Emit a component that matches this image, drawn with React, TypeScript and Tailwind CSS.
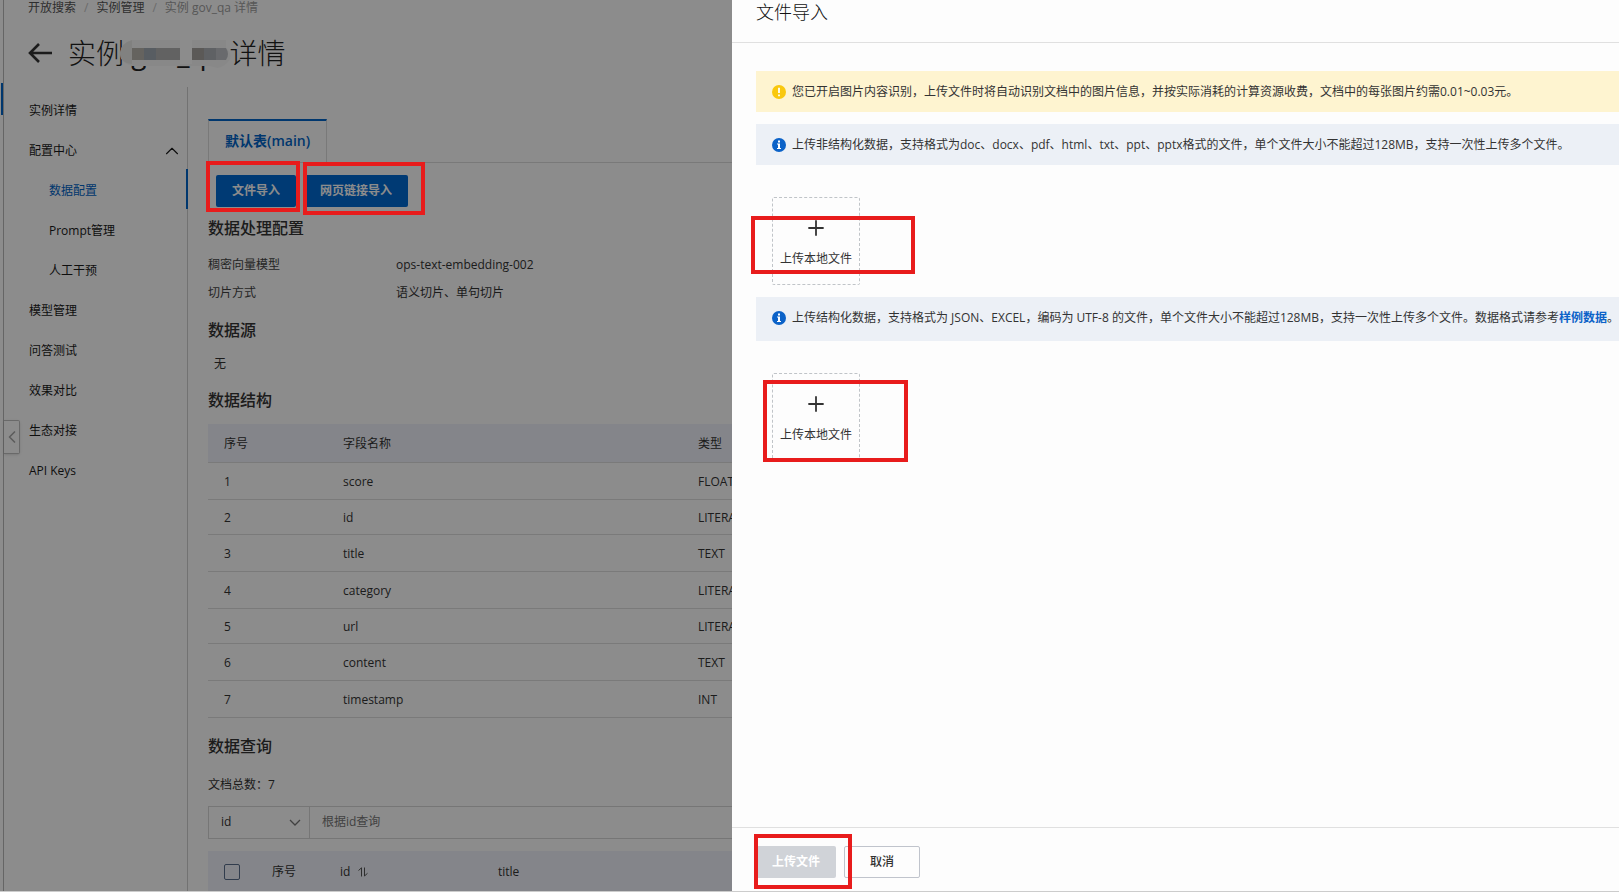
import { ChevronUp, ChevronLeft, Plus } from "lucide-react";

const menu = [
  { label: "实例详情" },
  { label: "配置中心", open: true },
  { label: "数据配置", sub: true, active: true },
  { label: "Prompt管理", sub: true },
  { label: "人工干预", sub: true },
  { label: "模型管理" },
  { label: "问答测试" },
  { label: "效果对比" },
  { label: "生态对接" },
  { label: "API Keys" },
];

const config = [
  { label: "稠密向量模型", value: "ops-text-embedding-002" },
  { label: "切片方式", value: "语义切片、单句切片" },
];

const fields = [
  { name: "score", type: "FLOAT" },
  { name: "id", type: "LITERAL" },
  { name: "title", type: "TEXT" },
  { name: "category", type: "LITERAL" },
  { name: "url", type: "LITERAL" },
  { name: "content", type: "TEXT" },
  { name: "timestamp", type: "INT" },
];

// Pixelated patch over the instance name
function Mosaic() {
  return (
    <svg className="absolute -left-1 top-[7px] w-[112px] h-[30px]" viewBox="0 0 112 30">
      <path
        d="M12 1H106V9Q112 13 110 20Q106 27 98 29L90 27H12Q0 24 0 14Q1 4 12 1Z"
        fill="#f8f8f8"
      />
      <path d="M12 1V25Q0 24 0 14Q1 4 12 1Z" fill="#ececea" />
      <rect x="12" y="9" width="12" height="12" fill="#b8b5ae" />
      <rect x="24" y="9" width="12" height="12" fill="#a0a9b2" />
      <rect x="36" y="9" width="24" height="12" fill="#b2b2b2" />
      <rect x="60" y="1" width="12" height="24" fill="#ffffff" />
      <rect x="72" y="9" width="12" height="12" fill="#a6a39f" />
      <rect x="84" y="9" width="12" height="12" fill="#adb1b6" />
      <path d="M96 9H106Q110 15 106 21H96Z" fill="#c0c2c6" />
    </svg>
  );
}

function AlertIcon({ type }: { type: "warning" | "info" }) {
  return type === "warning" ? (
    <svg className="w-3.5 h-3.5 shrink-0" viewBox="0 0 14 14">
      <circle cx="7" cy="7" r="7" fill="#f9c80e" />
      <path d="M7 2.8V8" stroke="#fff" strokeWidth="1.8" />
      <path d="M7 9.4V11.2" stroke="#fff" strokeWidth="1.8" />
    </svg>
  ) : (
    <svg className="w-3.5 h-3.5 shrink-0" viewBox="0 0 14 14">
      <circle cx="7" cy="7" r="7" fill="#0b62c8" />
      <path d="M6 2.6H8V4.4H6Z" fill="#fff" />
      <path d="M5 5.6H8V10H9V11H5V10H6V6.6H5Z" fill="#fff" />
    </svg>
  );
}

function UploadBox() {
  return (
    <button
      type="button"
      className="ml-4 w-[88px] h-[88px] flex flex-col items-center rounded-xs border border-dashed border-[#c0c4c8] pt-[18px] text-[#333]"
    >
      <Plus className="w-6 h-6" strokeWidth={1.8} />
      <span className="mt-2.5 leading-[18px]">上传本地文件</span>
    </button>
  );
}

function Sidebar() {
  return (
    <nav className="w-[184px] shrink-0 border-r border-[#d0d0d0] pt-1">
      {menu.map((item) => (
        <a
          key={item.label}
          href="#"
          className={`relative flex h-10 items-center justify-between pr-1 ${
            item.sub ? "pl-[45px]" : "pl-[25px]"
          } ${item.active ? "text-[#0064c8]" : "text-[#1a1a1a]"}`}
        >
          {item.label}
          {item.open && <ChevronUp className="w-[22px] h-[22px]" strokeWidth={1.2} />}
          {item.active && (
            <span className="absolute -right-px bottom-0.5 w-0.5 h-10 bg-[#0064c8]" />
          )}
        </a>
      ))}
    </nav>
  );
}

function InstancePage() {
  return (
    <div className="flex h-full bg-white text-[#333]">
      <div className="relative w-1 shrink-0 border-r border-[#b8b8b8]">
        <span className="absolute left-px top-[83px] w-0.5 h-8 bg-[#0064c8]" />
        <button
          type="button"
          aria-label="收起"
          className="absolute left-1 top-[420px] w-4 h-[34px] flex items-center justify-center rounded-r-xs border border-l-0 border-[#c0c0c0] bg-white text-[#aaa] shadow"
        >
          <ChevronLeft className="w-5 h-5 shrink-0" strokeWidth={2} />
        </button>
      </div>

      <div className="min-w-0 flex-1">
        <div className="flex h-4 items-center gap-2 pl-6 leading-4">
          <a href="#" className="text-[#555]">开放搜索</a>
          <span className="text-[#c4c4c4]">/</span>
          <a href="#" className="text-[#555]">实例管理</a>
          <span className="text-[#c4c4c4]">/</span>
          <span className="text-[#a0a0a0]">实例 gov_qa 详情</span>
        </div>
        <div className="mt-4 flex h-[42px] items-center gap-4 pl-6">
          <svg className="w-6 h-5 shrink-0" viewBox="0 0 24 20" fill="none" stroke="#333" strokeWidth="2.6">
            <path d="M24 10H2M11 1L2 10L11 19" />
          </svg>
          <h1 className="flex whitespace-pre text-[28px] font-light leading-[42px] text-[#222]">
            实例
            <span className="relative font-normal">
              {" gov_qa "}
              <Mosaic />
            </span>
            详情
          </h1>
        </div>

        <div className="mt-[13px] flex min-h-screen">
          <Sidebar />
          <main className="min-w-0 flex-1 pl-5 pt-8">
            <div className="flex border-b border-[#ddd]">
              <button
                type="button"
                className="h-[43px] border-x border-t-2 border-x-[#ddd] border-t-[#0064c8] px-4 pb-0.5 text-sm font-semibold text-[#0064c8]"
              >
                默认表(main)
              </button>
            </div>
            <div className="flex gap-2 pl-2 pt-3">
              <button type="button" className="h-8 rounded-xs bg-[#006ad4] px-4 font-bold text-white">
                文件导入
              </button>
              <button type="button" className="h-8 rounded-xs bg-[#006ad4] px-4 font-bold text-white">
                网页链接导入
              </button>
            </div>

            <h2 className="mt-[9px] text-base font-medium leading-6">数据处理配置</h2>
            <dl className="mt-[11px]">
              {config.map((row) => (
                <div key={row.label} className="flex h-7 items-center">
                  <dt className="w-[188px] text-[#444]">{row.label}</dt>
                  <dd>{row.value}</dd>
                </div>
              ))}
            </dl>

            <h2 className="mt-[11px] text-base font-medium leading-6">数据源</h2>
            <p className="mt-3 pl-1.5 leading-5">无</p>

            <h2 className="mt-3.5 text-base font-medium leading-6">数据结构</h2>
            <table className="mt-3 w-full table-fixed text-left">
              <thead>
                <tr className="h-[38px] border-b border-[#dedede] bg-[#f1f3fb]">
                  <th className="w-[119px] px-4 pt-0.5 font-normal">序号</th>
                  <th className="w-[355px] px-4 pt-0.5 font-normal">字段名称</th>
                  <th className="px-4 pt-0.5 font-normal">类型</th>
                </tr>
              </thead>
              <tbody>
                {fields.map((field, i) => (
                  <tr key={field.name} className="h-[37px] border-b border-[#dedede] [&:nth-child(3n+2)]:h-[35px]">
                    <td className="px-4 pt-0.5">{i + 1}</td>
                    <td className="px-4 pt-0.5">{field.name}</td>
                    <td className="px-4 pt-0.5">{field.type}</td>
                  </tr>
                ))}
              </tbody>
            </table>

            <h2 className="mt-4 text-base font-medium leading-6">数据查询</h2>
            <p className="mt-[17px] leading-5">文档总数：7</p>
            <div className="mt-[11px] flex h-[33px] border border-[#d8d8d8]">
              <div className="relative w-[101px] shrink-0 border-r border-[#d8d8d8]">
                <select aria-label="查询字段" className="h-full w-full appearance-none bg-transparent pl-3">
                  <option>id</option>
                </select>
                <svg className="pointer-events-none absolute right-2 top-2.5 w-3 h-3" viewBox="0 0 12 12" fill="none" stroke="#777" strokeWidth="1.3">
                  <path d="M1 3L6 8L11 3" />
                </svg>
              </div>
              <input
                aria-label="根据id查询"
                placeholder="根据id查询"
                className="min-w-0 flex-1 px-3 placeholder:text-[#777]"
              />
            </div>

            <table className="mt-3 w-full table-fixed text-left">
              <thead>
                <tr className="h-[42px] bg-[#f1f3fb]">
                  <th className="w-12 pl-4">
                    <input
                      type="checkbox"
                      aria-label="全选"
                      className="block w-4 h-4 appearance-none rounded-xs border border-[#5a6e8c]"
                    />
                  </th>
                  <th className="w-[68px] pl-4 font-normal">序号</th>
                  <th className="w-[158px] pl-4 font-normal">
                    <span className="flex items-center gap-2">
                      id
                      <svg className="w-2.5 h-2.5" viewBox="0 0 10 10" fill="none" stroke="#555">
                        <path d="M0.5 3.5L3.5 0.8V9.5M6.5 0.5V9L9.5 6.3" />
                      </svg>
                    </span>
                  </th>
                  <th className="pl-4 font-normal">title</th>
                </tr>
              </thead>
            </table>
          </main>
        </div>
      </div>
    </div>
  );
}

function ImportDrawer() {
  return (
    <aside className="flex min-w-0 flex-1 flex-col bg-[#fdfdfd] text-[#333]">
      <header className="h-[43px] border-b border-[#e0e0e0] pl-6">
        <h2 className="text-lg font-light leading-6 text-[#111]">文件导入</h2>
      </header>
      <div className="flex-1 overflow-hidden whitespace-nowrap pl-6 pt-7">
        <p className="flex h-[41px] items-center gap-1.5 bg-[#fef4d0] pl-4">
          <AlertIcon type="warning" />
          您已开启图片内容识别，上传文件时将自动识别文档中的图片信息，并按实际消耗的计算资源收费，文档中的每张图片约需0.01~0.03元。
        </p>
        <p className="mb-8 mt-3 flex h-[41px] items-center gap-1.5 bg-[#ecf0f6] pl-4">
          <AlertIcon type="info" />
          上传非结构化数据，支持格式为doc、docx、pdf、html、txt、ppt、pptx格式的文件，单个文件大小不能超过128MB，支持一次性上传多个文件。
        </p>
        <UploadBox />
        <p className="mb-8 mt-3 flex h-11 items-center gap-1.5 bg-[#ecf0f6] pb-0.5 pl-4">
          <AlertIcon type="info" />
          <span>
            上传结构化数据，支持格式为 JSON、EXCEL，编码为 UTF-8 的文件，单个文件大小不能超过128MB，支持一次性上传多个文件。数据格式请参考
            <a href="#" className="font-bold text-[#0b62c8]">样例数据</a>。
          </span>
        </p>
        <UploadBox />
      </div>
      <footer className="flex h-16 gap-2 border-t border-[#e0e0e0] pl-6 pt-[18px]">
        <button type="button" disabled className="h-8 w-20 rounded-xs bg-[#d0d3d8] font-bold text-white">
          上传文件
        </button>
        <button type="button" className="h-8 w-[76px] rounded-xs border border-[#c0c4cc] font-medium">
          取消
        </button>
      </footer>
    </aside>
  );
}

export default function App() {
  return (
    <div className="relative h-screen overflow-hidden border-b border-[#ccc] font-['Open_Sans','Noto_Sans_CJK_SC',sans-serif] text-xs">
      <InstancePage />
      <div className="absolute inset-0 flex bg-black/45">
        <div className="w-[732px] shrink-0" />
        <ImportDrawer />
      </div>

      {/* Step highlights */}
      <div className="pointer-events-none absolute inset-0">
        <div className="absolute left-[206px] top-[161px] w-[94px] h-[51px] border-4 border-[#e81c1c]" />
        <div className="absolute left-[303px] top-[162px] w-[122px] h-[53px] border-4 border-[#e81c1c]" />
        <div className="absolute left-[751px] top-[216px] w-[164px] h-[58px] border-4 border-[#e81c1c]" />
        <div className="absolute left-[763px] top-[380px] w-[145px] h-[82px] border-4 border-[#e81c1c]" />
        <div className="absolute left-[754px] top-[834px] w-[98px] h-[55px] border-4 border-[#e81c1c]" />
      </div>
    </div>
  );
}
